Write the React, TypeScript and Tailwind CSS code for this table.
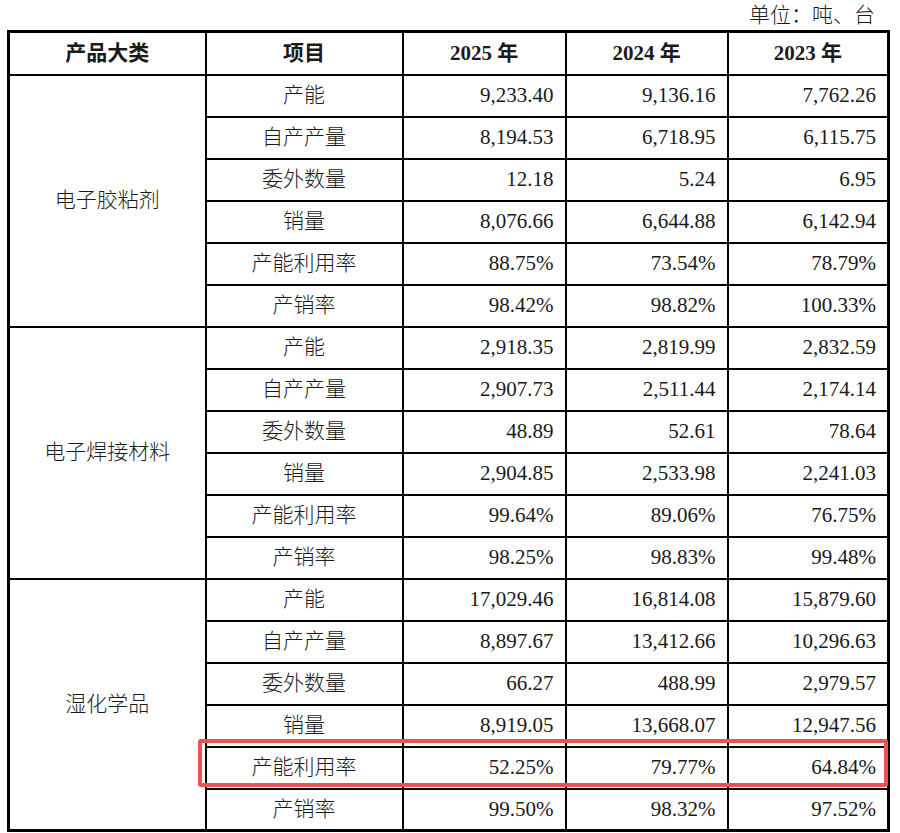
const groups = [
  {
    name: "电子胶粘剂",
    rows: [
      ["产能", "9,233.40", "9,136.16", "7,762.26"],
      ["自产产量", "8,194.53", "6,718.95", "6,115.75"],
      ["委外数量", "12.18", "5.24", "6.95"],
      ["销量", "8,076.66", "6,644.88", "6,142.94"],
      ["产能利用率", "88.75%", "73.54%", "78.79%"],
      ["产销率", "98.42%", "98.82%", "100.33%"],
    ],
  },
  {
    name: "电子焊接材料",
    rows: [
      ["产能", "2,918.35", "2,819.99", "2,832.59"],
      ["自产产量", "2,907.73", "2,511.44", "2,174.14"],
      ["委外数量", "48.89", "52.61", "78.64"],
      ["销量", "2,904.85", "2,533.98", "2,241.03"],
      ["产能利用率", "99.64%", "89.06%", "76.75%"],
      ["产销率", "98.25%", "98.83%", "99.48%"],
    ],
  },
  {
    name: "湿化学品",
    rows: [
      ["产能", "17,029.46", "16,814.08", "15,879.60"],
      ["自产产量", "8,897.67", "13,412.66", "10,296.63"],
      ["委外数量", "66.27", "488.99", "2,979.57"],
      ["销量", "8,919.05", "13,668.07", "12,947.56"],
      ["产能利用率", "52.25%", "79.77%", "64.84%"],
      ["产销率", "99.50%", "98.32%", "97.52%"],
    ],
  },
];

const cell = "border-2 border-black";
const num = `${cell} text-right pr-[11px]`;

const App = () => {
  return (
    <div
      className="relative w-[900px] h-[833px] bg-white text-[#1a1a1a] overflow-hidden"
      style={{ fontFamily: '"Liberation Serif", "Noto Sans CJK SC", serif' }}
    >
      {/* Unit */}
      <div className="h-[30px] flex items-center justify-end pr-[25px] pt-[2px] text-[21px] font-light">
        单位：吨、台
      </div>

      {/* Table */}
      <table className="ml-[7px] w-[883px] table-fixed border-collapse border-[3px] border-black text-[21px] font-light">
        <colgroup>
          <col className="w-[197px]" />
          <col className="w-[197px]" />
          <col className="w-[163px]" />
          <col className="w-[162px]" />
          <col />
        </colgroup>
        <thead>
          <tr className="h-[43px] font-bold">
            <th className={cell}>产品大类</th>
            <th className={cell}>项目</th>
            <th className={cell}>2025 年</th>
            <th className={cell}>2024 年</th>
            <th className={cell}>2023 年</th>
          </tr>
        </thead>
        <tbody>
          {groups.map((g) =>
            g.rows.map((r, i) => (
              <tr key={g.name + r[0]} className="h-[42px]">
                {i === 0 && (
                  <td rowSpan={6} className={`${cell} text-center`}>
                    {g.name}
                  </td>
                )}
                <td className={`${cell} text-center`}>{r[0]}</td>
                <td className={num}>{r[1]}</td>
                <td className={num}>{r[2]}</td>
                <td className={num}>{r[3]}</td>
              </tr>
            ))
          )}
        </tbody>
      </table>

      {/* Highlight box */}
      <div className="absolute left-[198px] top-[739px] w-[690px] h-[48px] border-4 border-[#ec5252] rounded-[3px]" />
    </div>
  );
};

export default App;
